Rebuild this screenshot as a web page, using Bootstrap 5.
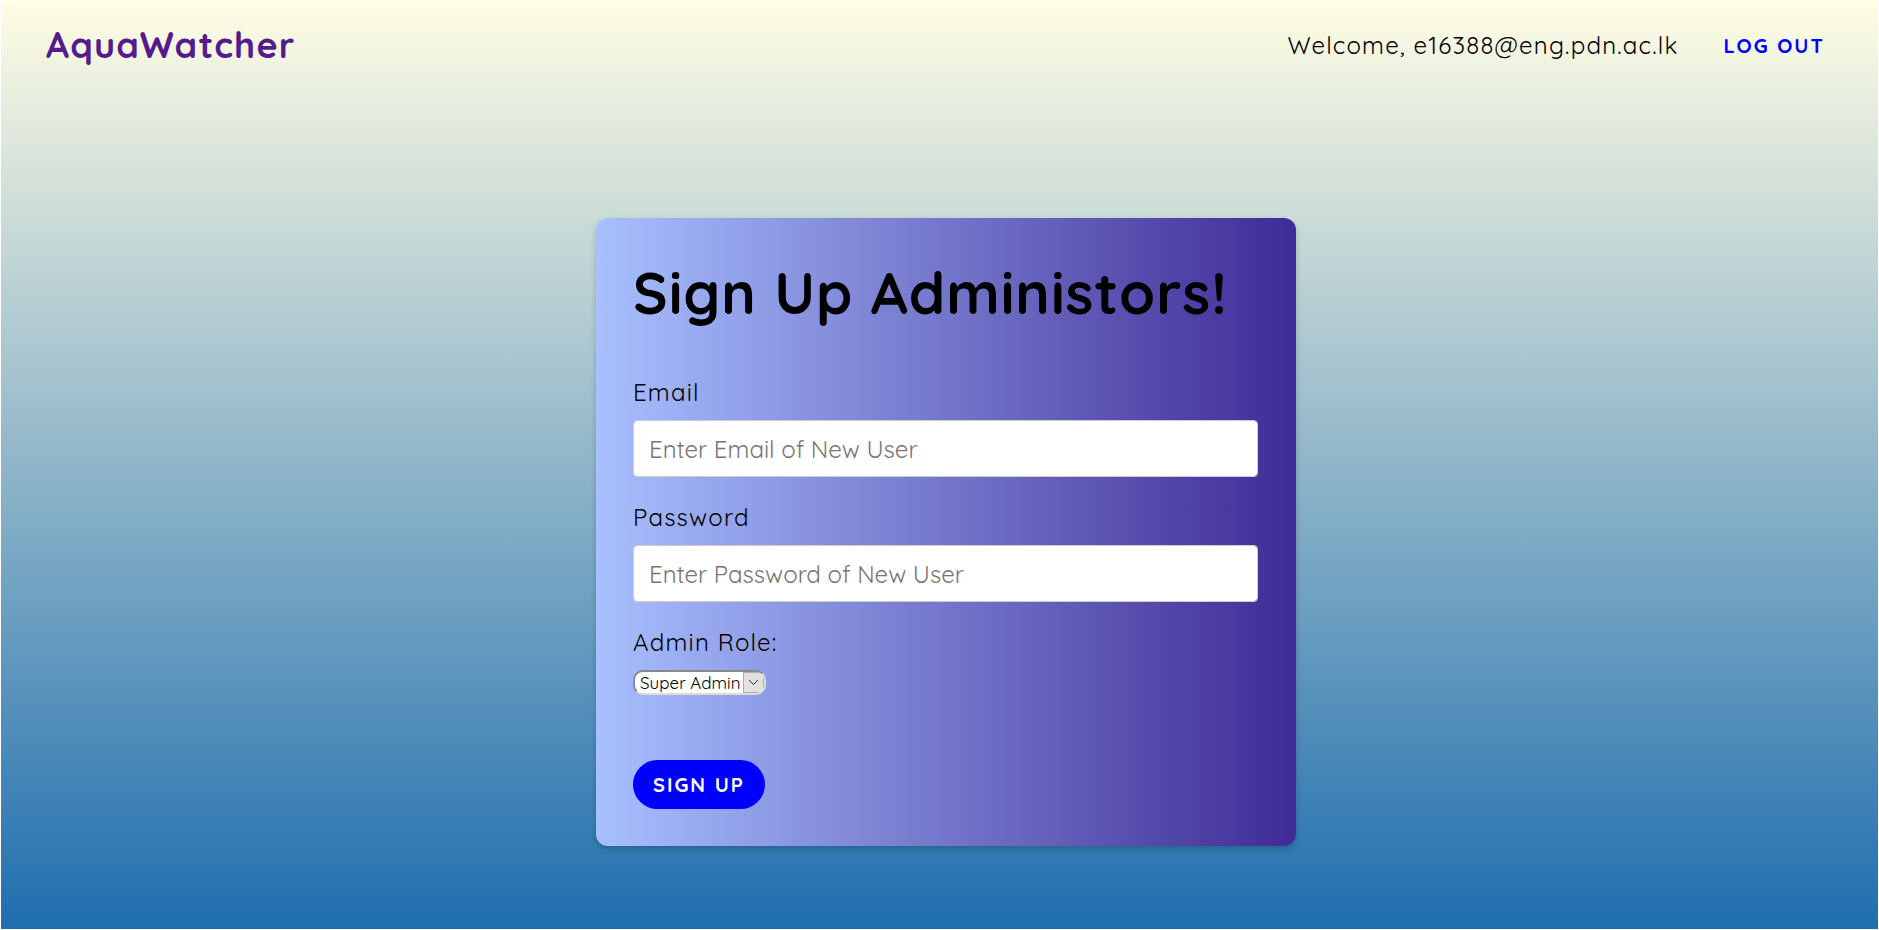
<!DOCTYPE html>
<html lang="en">
<head>
<meta charset="utf-8">
<meta name="viewport" content="width=device-width, initial-scale=1">
<title>AquaWatcher</title>
<link rel="stylesheet" href="https://cdn.jsdelivr.net/npm/bootstrap@5.3.0/dist/css/bootstrap.min.css">
<style>
  html { background: #fff; }
  body {
    font-family: Quicksand, Lato, sans-serif;
    font-size: 24px;
    line-height: 32px;
    letter-spacing: .05em;
    color: #000;
    background: transparent;
    padding: 1px;
  }
  .page-shell { background: linear-gradient(#fffde4, #005aa7) 0 0 / 100% 114% no-repeat; min-height: calc(100vh - 2px); }
  .site-bar { padding: 24px 39px 24px 45px; }
  .site-name { font-size: 36px; line-height: 40px; font-weight: 700; color: #551a8b; }
  .user-tools { gap: 31px; }
  .btn-pill {
    --bs-btn-font-size: 20px;
    --bs-btn-font-weight: 700;
    --bs-btn-line-height: 25px;
    --bs-btn-padding-x: 20px;
    --bs-btn-padding-y: 12px;
    --bs-btn-border-radius: 50rem;
    --bs-btn-border-width: 0;
    letter-spacing: 2px;
    text-transform: uppercase;
  }
  .btn-logout { --bs-btn-color: #00f; --bs-btn-hover-color: #00c; --bs-btn-padding-x: 14px; --bs-btn-padding-y: 7px; }
  .btn-signup { --bs-btn-color: #fff; --bs-btn-bg: #00f; --bs-btn-hover-color: #fff; --bs-btn-hover-bg: #00c; margin-top: 65px; }
  .signup-area { padding: 129px 0 80px 13px; }
  .signup-card {
    max-width: 700px;
    padding: 37px 38px 37px 37px;
    border-radius: 12px;
    background: linear-gradient(to right, #a8c0ff, #3f2b96);
    box-shadow: 0 3px 6px rgba(0, 0, 0, .2);
  }
  .signup-title { font-size: 58px; line-height: 76px; font-weight: 700; letter-spacing: 1px; margin-bottom: 45px; }
  .field-group { margin-bottom: 24px; }
  .field-label { display: block; margin-bottom: 12px; }
  .field-box { height: 57px; padding: 8px 15px; font-size: 24px; border: 1px solid #ccc; border-radius: 4px; color: #000; }
  .field-box::placeholder { color: #757575; }
  .role-wrap { width: 133px; height: 25px; border: 2px inset #ddd; border-radius: 10px; background: #fff; overflow: hidden; }
  .role-select { display: block; appearance: none; border: 0; background: transparent; font-size: 17px; line-height: 21px; padding: 0 20px 0 5px; color: #000; width: 100%; height: 21px; }
  .role-arrow { top: 0; right: 0; width: 21px; height: 21px; border: 1px solid #adadad; background: #e1e1e1; pointer-events: none; }
</style>
<script src="https://cdn.jsdelivr.net/npm/bootstrap@5.3.0/dist/js/bootstrap.bundle.min.js"></script>
</head>
<body>
<div class="page-shell">
  <header class="site-bar d-flex flex-wrap align-items-center justify-content-between gap-3">
    <a class="site-name text-decoration-none" href="#">AquaWatcher</a>
    <div class="user-tools d-flex flex-wrap align-items-center">
      <span>Welcome, e16388@eng.pdn.ac.lk</span>
      <button type="button" class="btn btn-pill btn-logout">Log out</button>
    </div>
  </header>
  <main class="signup-area">
    <form class="signup-card mx-auto">
      <h1 class="signup-title">Sign Up Administors!</h1>
      <div class="field-group">
        <label class="field-label" for="email">Email</label>
        <input class="form-control field-box" type="email" id="email" placeholder="Enter Email of New User">
      </div>
      <div class="field-group">
        <label class="field-label" for="password">Password</label>
        <input class="form-control field-box" type="password" id="password" placeholder="Enter Password of New User">
      </div>
      <label class="field-label" for="role">Admin Role:</label>
      <div class="role-wrap position-relative">
        <select class="role-select" id="role">
          <option>Super Admin</option>
          <option>Admin</option>
        </select>
        <span class="role-arrow position-absolute d-flex align-items-center justify-content-center">
          <svg width="11" height="7" viewBox="0 0 11 7" fill="none" stroke="#333"><path d="M1 1l4.500 4.500L10 1"/></svg>
        </span>
      </div>
      <button type="submit" class="btn btn-pill btn-signup">Sign up</button>
    </form>
  </main>
</div>
</body>
</html>
